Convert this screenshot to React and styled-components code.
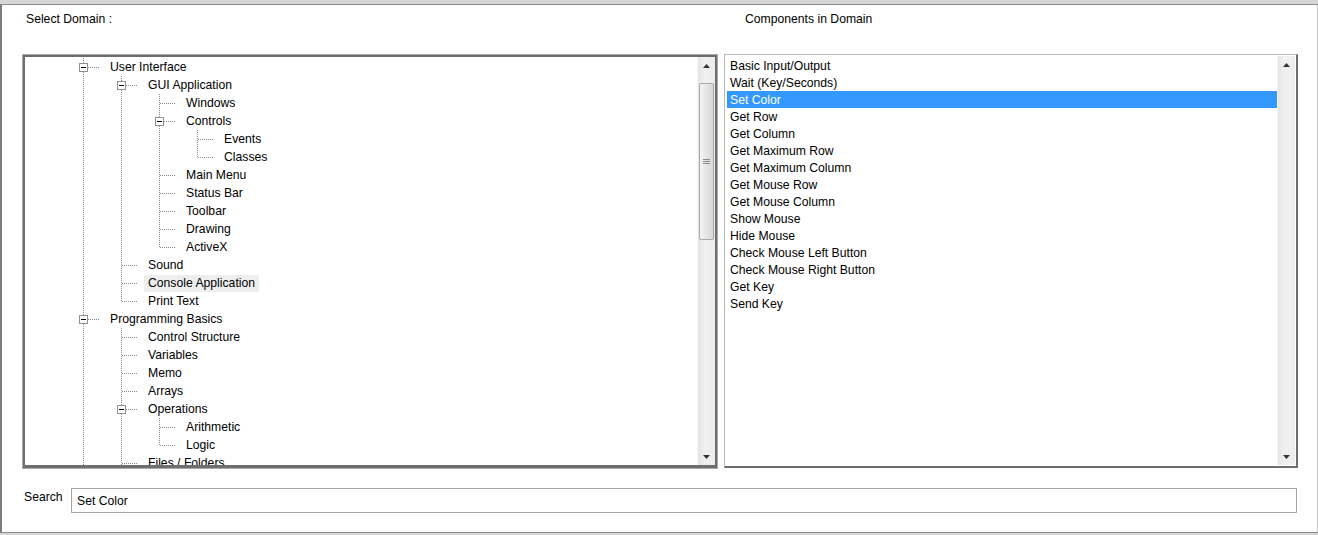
import styled, { createGlobalStyle } from "styled-components";

const GlobalStyle = createGlobalStyle`
  html, body {
    margin: 0;
    padding: 0;
    background: #ffffff;
  }
  body {
    font-family: "Liberation Sans", Arial, sans-serif;
    font-size: 12.2px;
    color: #000;
  }
`;

const treeRows = [
  { level: 0, label: "User Interface", open: true },
  { level: 1, label: "GUI Application", open: true },
  { level: 2, label: "Windows" },
  { level: 2, label: "Controls", open: true },
  { level: 3, label: "Events" },
  { level: 3, label: "Classes" },
  { level: 2, label: "Main Menu" },
  { level: 2, label: "Status Bar" },
  { level: 2, label: "Toolbar" },
  { level: 2, label: "Drawing" },
  { level: 2, label: "ActiveX" },
  { level: 1, label: "Sound" },
  { level: 1, label: "Console Application", hot: true },
  { level: 1, label: "Print Text" },
  { level: 0, label: "Programming Basics", open: true },
  { level: 1, label: "Control Structure" },
  { level: 1, label: "Variables" },
  { level: 1, label: "Memo" },
  { level: 1, label: "Arrays" },
  { level: 1, label: "Operations", open: true },
  { level: 2, label: "Arithmetic" },
  { level: 2, label: "Logic" },
  { level: 1, label: "Files / Folders" },
  { level: 1, label: "Date / Time" },
  { level: 0, label: "Multimedia" },
  { level: 0, label: "Network" },
];

const components = [
  "Basic Input/Output",
  "Wait (Key/Seconds)",
  "Set Color",
  "Get Row",
  "Get Column",
  "Get Maximum Row",
  "Get Maximum Column",
  "Get Mouse Row",
  "Get Mouse Column",
  "Show Mouse",
  "Hide Mouse",
  "Check Mouse Left Button",
  "Check Mouse Right Button",
  "Get Key",
  "Send Key",
];

// a row is "last" when no later sibling follows before the branch closes
const isLast = (i) => {
  const lvl = treeRows[i].level;
  for (let j = i + 1; j < treeRows.length; j++) {
    if (treeRows[j].level < lvl) return true;
    if (treeRows[j].level === lvl) return false;
  }
  return lvl > 0;
};

const guidesFor = (i) => {
  const lvl = treeRows[i].level;
  const out = [];
  for (let k = 0; k < lvl; k++) {
    let anc = -1;
    for (let j = i - 1; j >= 0; j--) {
      if (treeRows[j].level === k) {
        anc = j;
        break;
      }
    }
    out.push(anc >= 0 ? !isLast(anc) : false);
  }
  return out;
};

const Frame = styled.div`
  width: 1318px;
  height: 535px;
  display: flex;
  flex-direction: column;
  box-sizing: border-box;
  background: #d6d6d6;
  padding-bottom: 2px;
  overflow: hidden;
`;

const TopBand = styled.div`
  height: 4px;
  background: #d6d6d6;
  border-bottom: 1px solid #8a8a8a;
  flex-shrink: 0;
`;

const Content = styled.div`
  flex: 1;
  background: #ffffff;
  border-left: 2px solid #7c7c7c;
  border-right: 1px solid #c4c4c4;
  border-bottom: 1px solid #8a8a8a;
  display: flex;
  flex-direction: column;
  padding: 7px 19px 0 20px;
`;

const Columns = styled.div`
  display: grid;
  grid-template-columns: 696px 574px;
  column-gap: 6px;
  align-items: start;
`;

const Heading = styled.div`
  line-height: 14px;
  height: 42px;
  padding-left: ${(p) => p.$indent}px;
  white-space: nowrap;
`;

const TreePanel = styled.div`
  height: 415px;
  box-sizing: border-box;
  border: 1px solid #a9a9a9;
  background: #6e6e6e;
  padding: 2px 2px 3px 2px;
  display: flex;
`;

const ListPanel = styled.div`
  height: 414px;
  box-sizing: border-box;
  border-style: solid;
  border-width: 1px 2px 2px 1px;
  border-color: #b9b9b9 #6e6e6e #6e6e6e #b9b9b9;
  padding: 1px 1px 1px 2px;
  background: #ffffff;
  display: flex;
`;

const Body = styled.div`
  flex: 1;
  background: #ffffff;
  overflow: hidden;
  display: flex;
  flex-direction: column;
  padding-top: 1px;
  padding-left: ${(p) => p.$pad || 0}px;
`;

const TreeRow = styled.div`
  height: 18px;
  flex-shrink: 0;
  display: flex;
  align-items: center;
`;

const Gutter = styled.svg`
  width: 38px;
  height: 18px;
  flex-shrink: 0;
  display: block;
`;

const NodeLabel = styled.span`
  margin-left: 3px;
  padding: 0 4px;
  height: 17px;
  line-height: 17px;
  white-space: nowrap;
  background: ${(p) => (p.$hot ? "#eeeeee" : "transparent")};
`;

const ListItem = styled.div`
  height: 17px;
  line-height: 18px;
  flex-shrink: 0;
  padding-left: 3px;
  white-space: nowrap;
  background: ${(p) => (p.$selected ? "#3399ff" : "transparent")};
  color: ${(p) => (p.$selected ? "#ffffff" : "#000000")};
`;

const ScrollBar = styled.div`
  width: 17px;
  flex-shrink: 0;
  display: flex;
  flex-direction: column;
  background: linear-gradient(to right, #e4e4e4, #f1f1f1 40%, #ececec);
  border-left: 1px solid #f8f8f8;
`;

const ArrowButton = styled.div`
  height: 17px;
  flex-shrink: 0;
  display: flex;
  align-items: center;
  justify-content: center;
`;

const Track = styled.div`
  flex: 1;
  display: flex;
  flex-direction: column;
`;

const Thumb = styled.div`
  margin: 9px 1px 0 1px;
  height: 157px;
  box-sizing: border-box;
  border: 1px solid #a8a8a8;
  border-radius: 2px;
  background: linear-gradient(to right, #f5f5f5, #e2e2e2 60%, #d8d8d8);
  display: flex;
  align-items: center;
  justify-content: center;
`;

const Grip = styled.div`
  width: 7px;
  height: 1px;
  margin-top: -4px;
  background: #8a8a8a;
  box-shadow: 0 2px #8a8a8a, 0 4px #8a8a8a;
`;

const SearchRow = styled.div`
  margin-top: 19px;
  display: flex;
  align-items: flex-start;
  padding-left: 2px;
`;

const SearchLabel = styled.label`
  width: 47px;
  flex-shrink: 0;
  line-height: 14px;
  margin-top: 2px;
`;

const SearchInput = styled.input`
  flex: 1;
  height: 25px;
  box-sizing: border-box;
  border: 1px solid #a6a6a6;
  padding: 1px 5px 0 5px;
  font-family: "Liberation Sans", Arial, sans-serif;
  font-size: 12.2px;
  color: #000;
  outline: none;
  margin-right: 1px;
`;

const dots = "#8c8c8c";

const Guide = ({ on }) => (
  <Gutter viewBox="0 0 38 18">
    {on && (
      <line x1="18.5" y1="0" x2="18.5" y2="18" stroke={dots} strokeDasharray="1 1" />
    )}
  </Gutter>
);

const Branch = ({ last, open }) => (
  <Gutter viewBox="0 0 38 18">
    <line x1="18.5" y1="0" x2="18.5" y2={last ? 10 : 18} stroke={dots} strokeDasharray="1 1" />
    <line x1={open ? 23 : 19} y1="9.5" x2="35" y2="9.5" stroke={dots} strokeDasharray="1 1" />
    {open && (
      <>
        <rect x="14.5" y="5.5" width="8" height="8" fill="#ffffff" stroke="#919191" />
        <line x1="16" y1="9.5" x2="21" y2="9.5" stroke="#000000" />
      </>
    )}
  </Gutter>
);

const Arrow = ({ down }) => (
  <svg width="7" height="4" viewBox="0 0 7 4">
    <path d={down ? "M0 0H7L3.5 4Z" : "M3.5 0L7 4H0Z"} fill="#333333" />
  </svg>
);

const Scroller = ({ thumb }) => (
  <ScrollBar>
    <ArrowButton>
      <Arrow />
    </ArrowButton>
    <Track>
      {thumb && (
        <Thumb>
          <Grip />
        </Thumb>
      )}
    </Track>
    <ArrowButton>
      <Arrow down />
    </ArrowButton>
  </ScrollBar>
);

export default function App() {
  return (
    <>
      <GlobalStyle />
      <Frame>
        <TopBand />
        <Content>
          <Columns>
            <Heading $indent={4}>Select Domain :</Heading>
            <Heading $indent={21}>Components in Domain</Heading>
            <TreePanel>
              <Body $pad={40}>
                {treeRows.map((row, i) => (
                  <TreeRow key={row.label}>
                    {guidesFor(i).map((on, k) => (
                      <Guide key={k} on={on} />
                    ))}
                    <Branch last={isLast(i)} open={row.open} />
                    <NodeLabel $hot={row.hot}>{row.label}</NodeLabel>
                  </TreeRow>
                ))}
              </Body>
              <Scroller thumb />
            </TreePanel>
            <ListPanel>
              <Body>
                {components.map((name) => (
                  <ListItem key={name} $selected={name === "Set Color"}>
                    {name}
                  </ListItem>
                ))}
              </Body>
              <Scroller />
            </ListPanel>
          </Columns>
          <SearchRow>
            <SearchLabel>Search</SearchLabel>
            <SearchInput defaultValue="Set Color" />
          </SearchRow>
        </Content>
      </Frame>
    </>
  );
}
